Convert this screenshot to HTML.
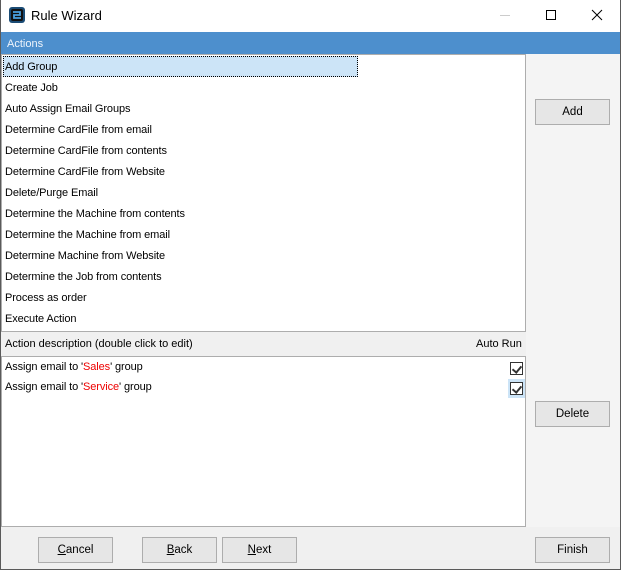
<!DOCTYPE html>
<html><head><style>
*{margin:0;padding:0;box-sizing:border-box}
body{width:621px;height:570px;overflow:hidden;background:#f4f4f4;font-family:"Liberation Sans",sans-serif;font-size:11px;color:#000;position:relative}
.win{position:absolute;left:0;top:0;width:621px;height:570px;border:1px solid #5a5a5a;border-top:none}
.title{position:absolute;left:0;top:0;width:621px;height:32px;background:#fff}
.abs{position:absolute}
.hdr{position:absolute;left:1px;top:32px;width:619px;height:22px;background:#4d8fcd;color:#eef4fb;padding:6px 0 0 6px}
.box{position:absolute;background:#fff;border:1px solid #adadad}
.item{position:absolute;left:4px;white-space:nowrap;letter-spacing:-0.1px}
.btn{position:absolute;height:26px;border:1px solid #adadad;background:#e6e6e6;text-align:center;line-height:24px;font-size:11.5px}
.cb{position:absolute;width:13px;height:13px;border:1px solid #333;background:#fff}
.cb:after{content:"";position:absolute;left:3px;top:1px;width:4px;height:7px;border:solid #333;border-width:0 2px 2px 0;transform:rotate(40deg)}
.red{color:#e00}
</style></head><body>
<div class="title">
 <svg class="abs" style="left:9px;top:7px" width="16" height="16" viewBox="0 0 16 16"><rect x="0" y="0" width="16" height="16" rx="3" fill="#1b4c75"/><rect x="2" y="2" width="12" height="12" rx="2" fill="#111"/><path d="M4 5h7v3H5v3h7" stroke="#4aa0e0" stroke-width="1.8" fill="none"/></svg>
 <div class="abs" style="left:31px;top:8px;font-size:13px">Rule Wizard</div>
 <div class="abs" style="left:500px;top:15px;width:10px;height:1px;background:#ccc"></div>
 <div class="abs" style="left:546px;top:10px;width:10px;height:10px;border:1px solid #000"></div>
 <svg class="abs" style="left:591px;top:9px" width="12" height="12"><path d="M1 1L11 11M11 1L1 11" stroke="#000" stroke-width="1"/></svg>
</div>
<div class="abs" style="left:1px;top:527px;width:619px;height:42px;background:#f0f0f0"></div>
<div class="win"></div>
<div class="hdr">Actions</div>
<div class="box" style="left:1px;top:54px;width:525px;height:278px">
 <div class="abs" style="left:1px;top:1px;width:355px;height:21px;background:#cce4f7;border:1px dotted #000"></div>
 <div class="item" style="top:6px;left:3px">Add Group</div>
 <div class="item" style="top:27px;left:3px">Create Job</div>
 <div class="item" style="top:48px;left:3px">Auto Assign Email Groups</div>
 <div class="item" style="top:69px;left:3px">Determine CardFile from email</div>
 <div class="item" style="top:90px;left:3px">Determine CardFile from contents</div>
 <div class="item" style="top:111px;left:3px">Determine CardFile from Website</div>
 <div class="item" style="top:132px;left:3px">Delete/Purge Email</div>
 <div class="item" style="top:153px;left:3px">Determine the Machine from contents</div>
 <div class="item" style="top:174px;left:3px">Determine the Machine from email</div>
 <div class="item" style="top:195px;left:3px">Determine Machine from Website</div>
 <div class="item" style="top:216px;left:3px">Determine the Job from contents</div>
 <div class="item" style="top:237px;left:3px">Process as order</div>
 <div class="item" style="top:258px;left:3px">Execute Action</div>
</div>
<div class="abs" style="left:1px;top:332px;width:525px;height:24px;background:#f0f0f0"></div>
<div class="abs" style="left:5px;top:338px">Action description (double click to edit)</div>
<div class="abs" style="left:476px;top:338px">Auto Run</div>
<div class="box" style="left:1px;top:356px;width:525px;height:171px">
 <div class="item" style="top:4px;left:3px">Assign email to '<span class="red">Sales</span>' group</div>
 <div class="item" style="top:24px;left:3px">Assign email to '<span class="red">Service</span>' group</div>
 <div class="cb" style="left:508px;top:5px"></div>
 <div class="abs" style="left:506px;top:22px;width:17px;height:19px;background:#cce4f7"></div>
 <div class="cb" style="left:508px;top:25px"></div>
</div>
<div class="btn" style="left:535px;top:99px;width:75px">Add</div>
<div class="btn" style="left:535px;top:401px;width:75px">Delete</div>
<div class="btn" style="left:38px;top:537px;width:75px"><u>C</u>ancel</div>
<div class="btn" style="left:142px;top:537px;width:75px"><u>B</u>ack</div>
<div class="btn" style="left:222px;top:537px;width:75px"><u>N</u>ext</div>
<div class="btn" style="left:535px;top:537px;width:75px">Finish</div>
</body></html>
